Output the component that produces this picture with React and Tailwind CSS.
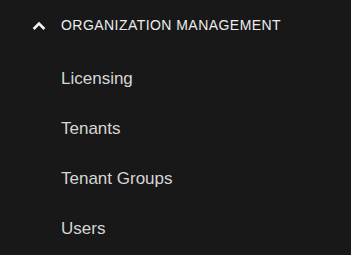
import React from "react";

export default function App() {
  const items = ["Licensing", "Tenants", "Tenant Groups", "Users"];
  return (
    <div className="w-[351px] h-[255px] bg-[#181818] overflow-hidden pt-[1px] font-['Liberation_Sans',Arial,sans-serif]">
      <div className="h-12 flex items-center">
        <div className="w-[61px] h-full flex items-center pl-[32px]">
          <svg width="14" height="10" viewBox="0 0 14 10" className="mt-[1px]">
            <polyline
              points="1.6,8 7,2.6 12.4,8"
              fill="none"
              stroke="#f4f4f4"
              strokeWidth="2.6"
              strokeLinecap="butt"
              strokeLinejoin="miter"
            />
          </svg>
        </div>
        <span className="text-[14px] leading-[48px] tracking-[0.45px] text-[#ececec]">
          ORGANIZATION MANAGEMENT
        </span>
      </div>
      <ul className="mt-[5px]">
        {items.map((t) => (
          <li
            key={t}
            className="h-[50px] pl-[61px] text-[17px] leading-[50px] text-[#d6d6d6]"
          >
            {t}
          </li>
        ))}
      </ul>
    </div>
  );
}
